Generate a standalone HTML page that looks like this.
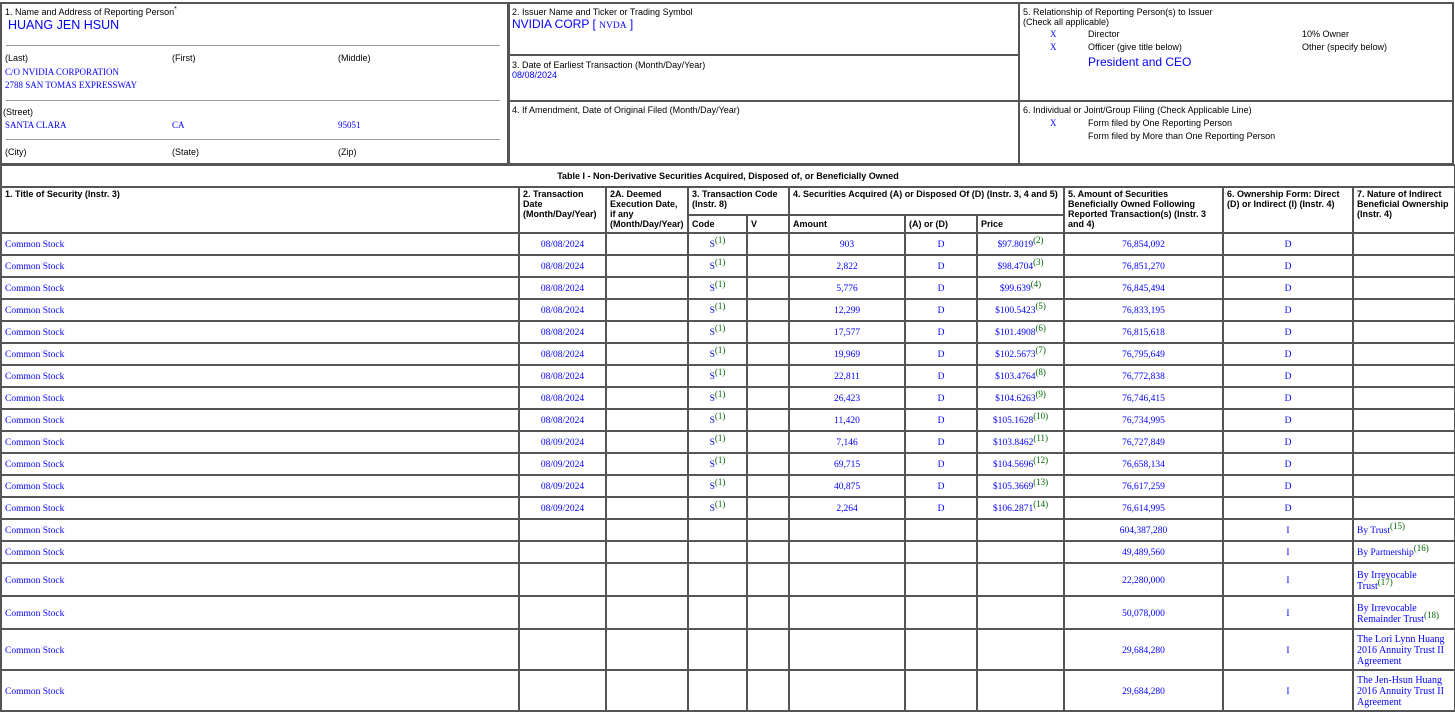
<!DOCTYPE html>
<html><head><meta charset="utf-8"><style>
body{margin:0;background:#fff;width:1455px;height:717px;overflow:hidden;font-family:"Liberation Sans",Arial,sans-serif;font-size:9px;color:#000}
.b{position:absolute;border:2px solid #555;box-sizing:border-box;padding:3px 3px}
.v{color:#00f}
.t{font-family:"Liberation Serif",serif;font-size:9.5px;color:#00f}
.l{position:absolute;font-size:9px}
hr.h{position:absolute;border:0;border-top:1px solid #999;margin:0;height:0}
table{position:absolute;left:0;top:164px;width:1454px;border-collapse:collapse;table-layout:fixed}
td,th{border:2px solid #555;padding:1px 3px;font-size:9px;vertical-align:top;text-align:left;overflow:hidden}
th{font-weight:bold;line-height:10px}
td.d{font-family:"Liberation Serif",serif;color:#00f;text-align:center;vertical-align:middle;font-size:9.5px;padding-top:3px}
td.s{font-family:"Liberation Serif",serif;color:#00f;text-align:left;vertical-align:middle;font-size:9.5px;padding-top:3px}
td.n{font-size:10px;line-height:11px}
sup{color:#060;font-size:9px;vertical-align:4px;line-height:0}
tr.r{height:22px}
</style></head><body>
<div class="b" style="left:0;top:2px;width:510px;height:163px;">
<div>1. Name and Address of Reporting Person<sup style="color:#000;font-size:7px">*</sup></div>
<div class="v" style="font-size:12.5px;margin-left:3px;margin-top:1px">HUANG JEN HSUN</div>
</div>
<hr class="h" style="left:6px;top:45px;width:494px">
<div class="l" style="left:5px;top:53px">(Last)</div><div class="l" style="left:172px;top:53px">(First)</div><div class="l" style="left:338px;top:53px">(Middle)</div>
<div class="l t" style="left:5px;top:67px">C/O NVIDIA CORPORATION</div>
<div class="l t" style="left:5px;top:80px">2788 SAN TOMAS EXPRESSWAY</div>
<hr class="h" style="left:6px;top:100px;width:494px">
<div class="l" style="left:3px;top:107px">(Street)</div>
<div class="l t" style="left:5px;top:120px">SANTA CLARA</div><div class="l t" style="left:172px;top:120px">CA</div><div class="l t" style="left:338px;top:120px">95051</div>
<hr class="h" style="left:6px;top:139px;width:494px">
<div class="l" style="left:5px;top:147px">(City)</div><div class="l" style="left:172px;top:147px">(State)</div><div class="l" style="left:338px;top:147px">(Zip)</div>

<div class="b" style="left:507px;top:2px;width:513px;height:54px;">2. Issuer Name and Ticker or Trading Symbol<br><span class="v" style="font-size:12px">NVIDIA CORP [ <span class="t">NVDA</span> ]</span></div>
<div class="b" style="left:507px;top:54px;width:513px;height:48px;padding-top:4px">3. Date of Earliest Transaction (Month/Day/Year)<br><span class="v">08/08/2024</span></div>
<div class="b" style="left:507px;top:100px;width:513px;height:65px;">4. If Amendment, Date of Original Filed (Month/Day/Year)</div>
<div class="b" style="left:1018px;top:2px;width:436px;height:100px;line-height:10px">5. Relationship of Reporting Person(s) to Issuer<br>(Check all applicable)</div>
<div class="l t" style="left:1050px;top:29px">X</div><div class="l" style="left:1088px;top:29px">Director</div><div class="l" style="left:1302px;top:29px">10% Owner</div>
<div class="l t" style="left:1050px;top:42px">X</div><div class="l" style="left:1088px;top:42px">Officer (give title below)</div><div class="l" style="left:1302px;top:42px">Other (specify below)</div>
<div class="l v" style="left:1088px;top:55px;font-size:12px">President and CEO</div>
<div class="b" style="left:1018px;top:100px;width:436px;height:65px;">6. Individual or Joint/Group Filing (Check Applicable Line)</div>
<div class="l t" style="left:1050px;top:118px">X</div><div class="l" style="left:1088px;top:118px">Form filed by One Reporting Person</div>
<div class="l" style="left:1088px;top:131px">Form filed by More than One Reporting Person</div>

<table>
<colgroup><col style="width:518px"><col style="width:87px"><col style="width:82px"><col style="width:59px"><col style="width:42px"><col style="width:116px"><col style="width:72px"><col style="width:87px"><col style="width:159px"><col style="width:130px"><col style="width:102px"></colgroup>
<tr style="height:22px"><th colspan="11" style="text-align:center;vertical-align:middle">Table I - Non-Derivative Securities Acquired, Disposed of, or Beneficially Owned</th></tr>
<tr style="height:28px"><th rowspan="2">1. Title of Security (Instr. 3)</th><th rowspan="2">2. Transaction Date (Month/Day/Year)</th><th rowspan="2">2A. Deemed Execution Date, if any (Month/Day/Year)</th><th colspan="2">3. Transaction Code (Instr. 8)</th><th colspan="3">4. Securities Acquired (A) or Disposed Of (D) (Instr. 3, 4 and 5)</th><th rowspan="2">5. Amount of Securities Beneficially Owned Following Reported Transaction(s) (Instr. 3 and 4)</th><th rowspan="2">6. Ownership Form: Direct (D) or Indirect (I) (Instr. 4)</th><th rowspan="2">7. Nature of Indirect Beneficial Ownership (Instr. 4)</th></tr>
<tr style="height:18px"><th style="vertical-align:middle">Code</th><th style="vertical-align:middle">V</th><th style="vertical-align:middle">Amount</th><th style="vertical-align:middle">(A) or (D)</th><th style="vertical-align:middle">Price</th></tr>
<tr class="r"><td class="s">Common Stock</td><td class="d">08/08/2024</td><td></td><td class="d">S<sup>(1)</sup></td><td></td><td class="d">903</td><td class="d">D</td><td class="d">$97.8019<sup>(2)</sup></td><td class="d">76,854,092</td><td class="d">D</td><td></td></tr>
<tr class="r"><td class="s">Common Stock</td><td class="d">08/08/2024</td><td></td><td class="d">S<sup>(1)</sup></td><td></td><td class="d">2,822</td><td class="d">D</td><td class="d">$98.4704<sup>(3)</sup></td><td class="d">76,851,270</td><td class="d">D</td><td></td></tr>
<tr class="r"><td class="s">Common Stock</td><td class="d">08/08/2024</td><td></td><td class="d">S<sup>(1)</sup></td><td></td><td class="d">5,776</td><td class="d">D</td><td class="d">$99.639<sup>(4)</sup></td><td class="d">76,845,494</td><td class="d">D</td><td></td></tr>
<tr class="r"><td class="s">Common Stock</td><td class="d">08/08/2024</td><td></td><td class="d">S<sup>(1)</sup></td><td></td><td class="d">12,299</td><td class="d">D</td><td class="d">$100.5423<sup>(5)</sup></td><td class="d">76,833,195</td><td class="d">D</td><td></td></tr>
<tr class="r"><td class="s">Common Stock</td><td class="d">08/08/2024</td><td></td><td class="d">S<sup>(1)</sup></td><td></td><td class="d">17,577</td><td class="d">D</td><td class="d">$101.4908<sup>(6)</sup></td><td class="d">76,815,618</td><td class="d">D</td><td></td></tr>
<tr class="r"><td class="s">Common Stock</td><td class="d">08/08/2024</td><td></td><td class="d">S<sup>(1)</sup></td><td></td><td class="d">19,969</td><td class="d">D</td><td class="d">$102.5673<sup>(7)</sup></td><td class="d">76,795,649</td><td class="d">D</td><td></td></tr>
<tr class="r"><td class="s">Common Stock</td><td class="d">08/08/2024</td><td></td><td class="d">S<sup>(1)</sup></td><td></td><td class="d">22,811</td><td class="d">D</td><td class="d">$103.4764<sup>(8)</sup></td><td class="d">76,772,838</td><td class="d">D</td><td></td></tr>
<tr class="r"><td class="s">Common Stock</td><td class="d">08/08/2024</td><td></td><td class="d">S<sup>(1)</sup></td><td></td><td class="d">26,423</td><td class="d">D</td><td class="d">$104.6263<sup>(9)</sup></td><td class="d">76,746,415</td><td class="d">D</td><td></td></tr>
<tr class="r"><td class="s">Common Stock</td><td class="d">08/08/2024</td><td></td><td class="d">S<sup>(1)</sup></td><td></td><td class="d">11,420</td><td class="d">D</td><td class="d">$105.1628<sup>(10)</sup></td><td class="d">76,734,995</td><td class="d">D</td><td></td></tr>
<tr class="r"><td class="s">Common Stock</td><td class="d">08/09/2024</td><td></td><td class="d">S<sup>(1)</sup></td><td></td><td class="d">7,146</td><td class="d">D</td><td class="d">$103.8462<sup>(11)</sup></td><td class="d">76,727,849</td><td class="d">D</td><td></td></tr>
<tr class="r"><td class="s">Common Stock</td><td class="d">08/09/2024</td><td></td><td class="d">S<sup>(1)</sup></td><td></td><td class="d">69,715</td><td class="d">D</td><td class="d">$104.5696<sup>(12)</sup></td><td class="d">76,658,134</td><td class="d">D</td><td></td></tr>
<tr class="r"><td class="s">Common Stock</td><td class="d">08/09/2024</td><td></td><td class="d">S<sup>(1)</sup></td><td></td><td class="d">40,875</td><td class="d">D</td><td class="d">$105.3669<sup>(13)</sup></td><td class="d">76,617,259</td><td class="d">D</td><td></td></tr>
<tr class="r"><td class="s">Common Stock</td><td class="d">08/09/2024</td><td></td><td class="d">S<sup>(1)</sup></td><td></td><td class="d">2,264</td><td class="d">D</td><td class="d">$106.2871<sup>(14)</sup></td><td class="d">76,614,995</td><td class="d">D</td><td></td></tr>
<tr class="r"><td class="s">Common Stock</td><td></td><td></td><td></td><td></td><td></td><td></td><td></td><td class="d">604,387,280</td><td class="d">I</td><td class="s">By Trust<sup>(15)</sup></td></tr>
<tr class="r"><td class="s">Common Stock</td><td></td><td></td><td></td><td></td><td></td><td></td><td></td><td class="d">49,489,560</td><td class="d">I</td><td class="s">By Partnership<sup>(16)</sup></td></tr>
<tr style="height:33px"><td class="s">Common Stock</td><td></td><td></td><td></td><td></td><td></td><td></td><td></td><td class="d">22,280,000</td><td class="d">I</td><td class="s n">By Irrevocable<br>Trust<sup>(17)</sup></td></tr>
<tr style="height:33px"><td class="s">Common Stock</td><td></td><td></td><td></td><td></td><td></td><td></td><td></td><td class="d">50,078,000</td><td class="d">I</td><td class="s n">By Irrevocable<br>Remainder Trust<sup>(18)</sup></td></tr>
<tr style="height:41px"><td class="s">Common Stock</td><td></td><td></td><td></td><td></td><td></td><td></td><td></td><td class="d">29,684,280</td><td class="d">I</td><td class="s n">The Lori Lynn Huang 2016 Annuity Trust II Agreement</td></tr>
<tr style="height:41px"><td class="s">Common Stock</td><td></td><td></td><td></td><td></td><td></td><td></td><td></td><td class="d">29,684,280</td><td class="d">I</td><td class="s n">The Jen-Hsun Huang 2016 Annuity Trust II Agreement</td></tr>
</table>
</body></html>
